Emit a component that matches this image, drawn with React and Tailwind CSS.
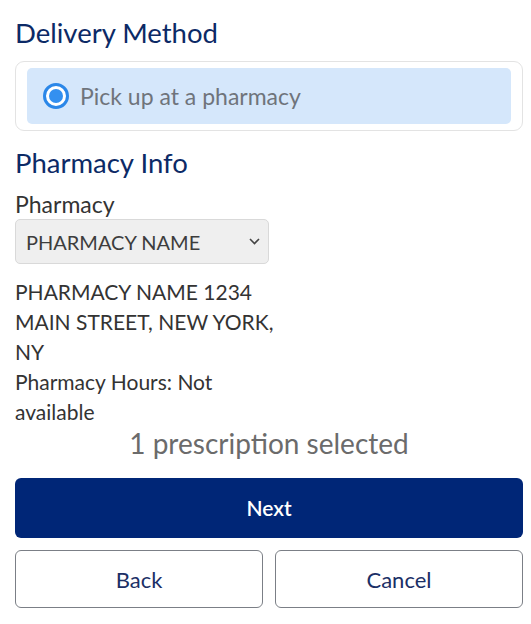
import React from 'react';

export default function App() {
  return (
    <div
      className="w-[531px] h-[624px] bg-white pl-[15px] pr-[8px] overflow-hidden"
      style={{ fontFamily: 'Lato, "Noto Sans", sans-serif' }}
    >
      <h2 className="pt-[15px] text-[27.5px] leading-[36px] text-[#0c2a66]">Delivery Method</h2>

      <div className="mt-[10px] rounded-[9px] border border-[#e3e3e3] px-[11px] py-[6px]">
        <label className="flex items-center h-[56px] rounded-[5px] bg-[#d5e7fb] pl-[16px]">
          <span className="flex items-center justify-center w-[26px] h-[26px] rounded-full border-[3px] border-[#2b87e8] bg-white">
            <span className="w-[14px] h-[14px] rounded-full bg-[#3390f0]" />
          </span>
          <span className="ml-[11px] text-[23px] text-[#6f747b]">Pick up at a pharmacy</span>
        </label>
      </div>

      <h2 className="mt-[14px] text-[27.5px] leading-[36px] text-[#0c2a66]">Pharmacy Info</h2>

      <div className="w-[268px]">
        <div className="mt-[10px] text-[23px] leading-[26px] text-[#333]">Pharmacy</div>
        <div className="mt-[2px] w-[254px] flex items-center justify-between h-[45px] rounded-[5px] border border-[#d9d9d9] bg-[#efefef] pl-[10px] pr-[8px]">
          <span className="text-[20px] text-[#3d3d3d]">PHARMACY NAME</span>
          <svg width="11" height="7" viewBox="0 0 11 7" fill="none">
            <path d="M1 1l4.5 4.5L10 1" stroke="#444" strokeWidth="1.6" />
          </svg>
        </div>
        <div className="mt-[13px] text-[21px] leading-[30px] text-[#333]">
          <div>PHARMACY NAME 1234 MAIN STREET, NEW YORK, NY</div>
          <div>Pharmacy Hours: Not available</div>
        </div>
      </div>

      <div className="text-center text-[28px] leading-[32px] text-[#6b6b6b]">1 prescription selected</div>

      <button className="mt-[19px] w-full h-[60px] rounded-[6px] bg-[#002677] text-white text-[21px] font-semibold">
        Next
      </button>

      <div className="mt-[12px] grid grid-cols-2 gap-[12px]">
        <button className="h-[58px] rounded-[6px] border-[1.5px] border-[#7b7f86] bg-white text-[22px] text-[#1b2f66]">
          Back
        </button>
        <button className="h-[58px] rounded-[6px] border-[1.5px] border-[#7b7f86] bg-white text-[22px] text-[#1b2f66]">
          Cancel
        </button>
      </div>
    </div>
  );
}
